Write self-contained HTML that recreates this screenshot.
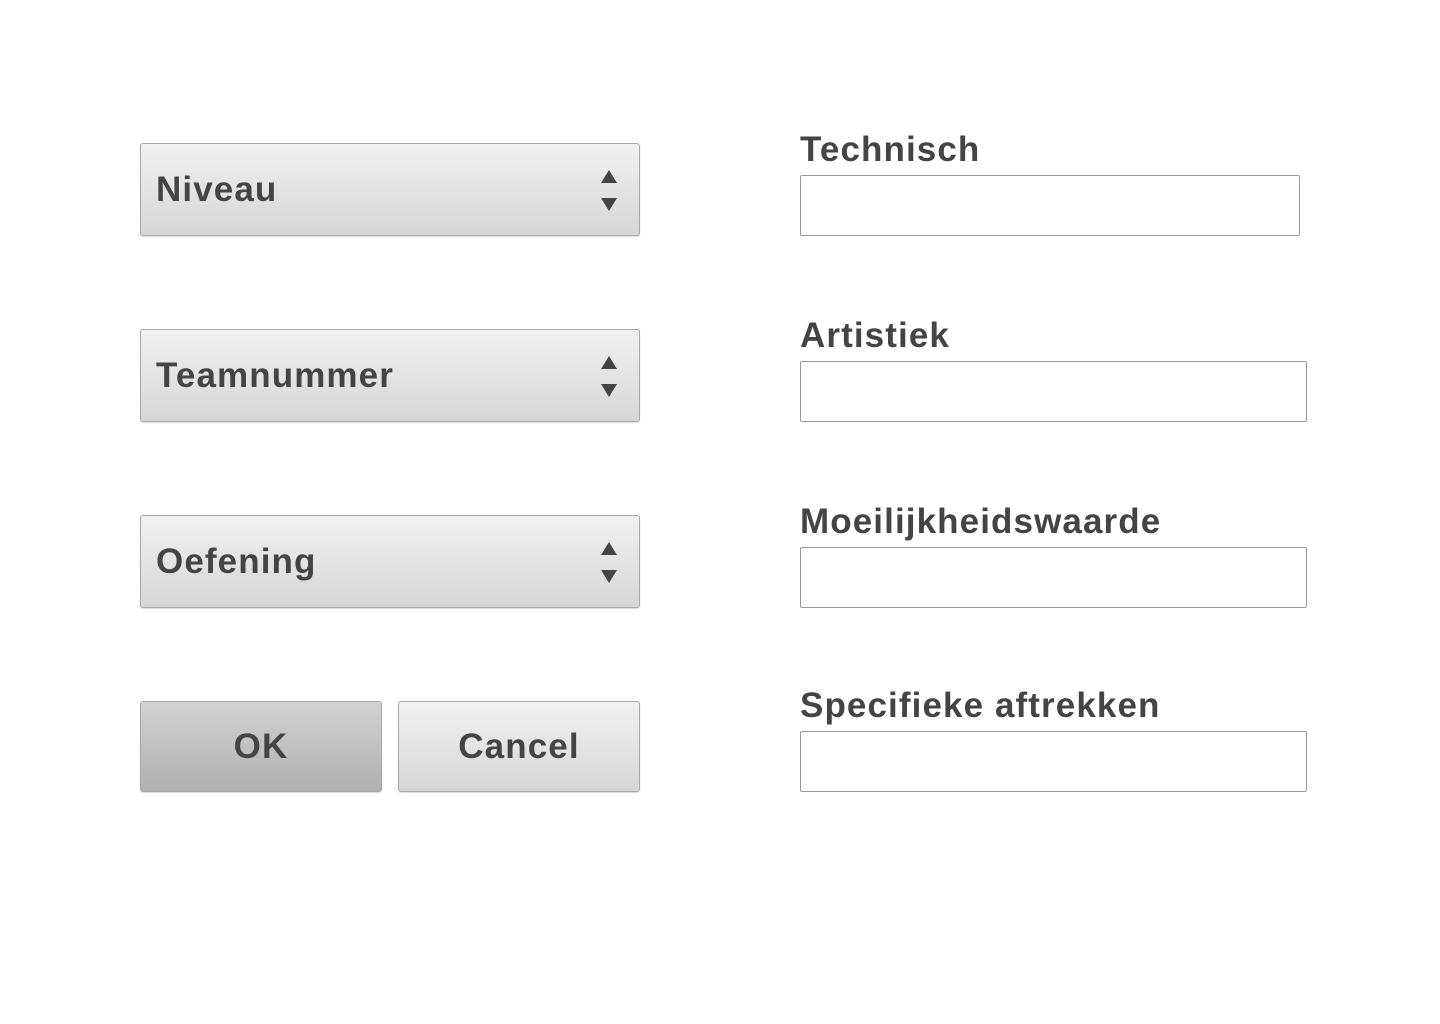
<!DOCTYPE html>
<html><head><style>
body{margin:0;width:1440px;height:1024px;background:#fff;font-family:"Liberation Sans",Arial,sans-serif;font-weight:bold;color:#444;position:relative;overflow:hidden;letter-spacing:1.1px}
.sel,.btn{position:absolute;box-sizing:border-box;border:1px solid #a8a8a8;border-radius:3px;background:linear-gradient(#f1f1f1,#d6d6d6);box-shadow:0 1px 1px rgba(0,0,0,.15)}
.sel{left:140px;width:500px;height:93px;font-size:35px;line-height:91px;padding-left:15px}
.arr{position:absolute;right:22px;width:0;height:0;border-left:8px solid transparent;border-right:8px solid transparent}
.up{top:26px;border-bottom:13px solid #444}
.dn{top:54px;border-top:13px solid #444}
.btn{top:701px;width:242px;height:91px;font-size:35px;line-height:89px;text-align:center}
.ok{left:140px;background:linear-gradient(#d2d2d2,#b0b0b0)}
.cancel{left:398px}
.lbl{position:absolute;left:800px;font-size:35px;line-height:40px}
.inp{position:absolute;left:800px;width:507px;height:61px;box-sizing:border-box;border:1px solid #999;border-radius:2px;background:#fff}
</style></head><body>
<div class="sel" style="top:143px">Niveau<div class="arr up"></div><div class="arr dn"></div></div>
<div class="sel" style="top:329px">Teamnummer<div class="arr up"></div><div class="arr dn"></div></div>
<div class="sel" style="top:515px">Oefening<div class="arr up"></div><div class="arr dn"></div></div>
<div class="btn ok">OK</div>
<div class="btn cancel">Cancel</div>
<div class="lbl" style="top:130px">Technisch</div>
<div class="inp" style="top:175px;width:500px"></div>
<div class="lbl" style="top:316px">Artistiek</div>
<div class="inp" style="top:361px"></div>
<div class="lbl" style="top:502px">Moeilijkheidswaarde</div>
<div class="inp" style="top:547px"></div>
<div class="lbl" style="top:686px">Specifieke aftrekken</div>
<div class="inp" style="top:731px"></div>
</body></html>
